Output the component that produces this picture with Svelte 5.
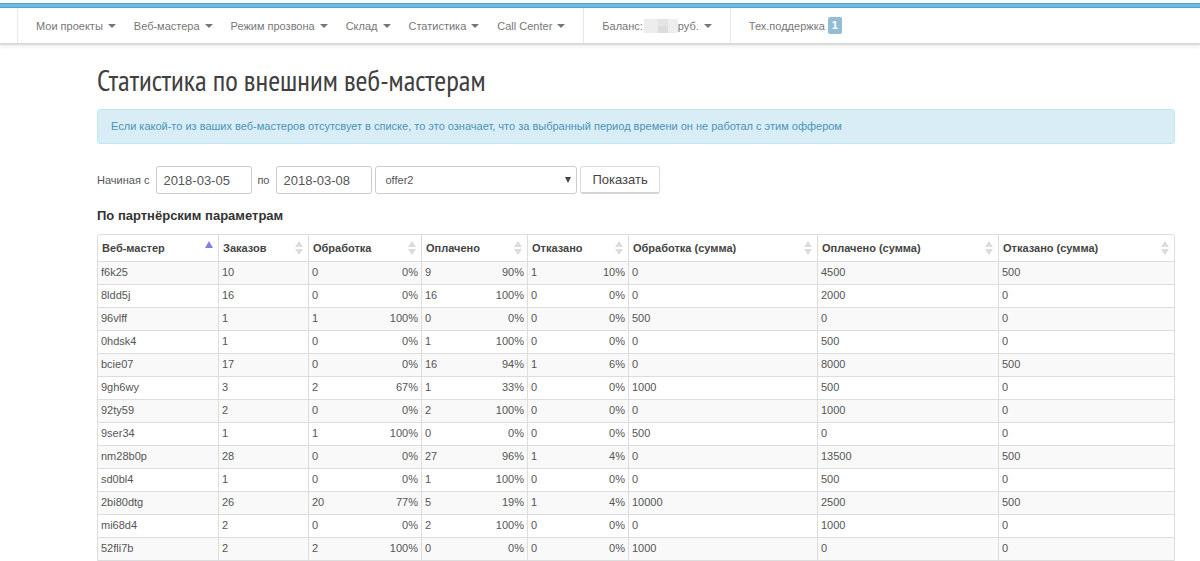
<script lang="ts">
	interface Cell {
		value: string;
		percent?: string;
	}

	const menu = ['Мои проекты', 'Веб-мастера', 'Режим прозвона', 'Склад', 'Статистика', 'Call Center'];

	const columns = [
		{ title: 'Веб-мастер', width: 120 },
		{ title: 'Заказов', width: 90 },
		{ title: 'Обработка', width: 113 },
		{ title: 'Оплачено', width: 106 },
		{ title: 'Отказано', width: 101 },
		{ title: 'Обработка (сумма)', width: 189 },
		{ title: 'Оплачено (сумма)', width: 181 },
		{ title: 'Отказано (сумма)', width: 176 }
	];

	// "count/percent" is drawn as a left and a right value in one cell
	const source = [
		['f6k25', '10', '0/0%', '9/90%', '1/10%', '0', '4500', '500'],
		['8ldd5j', '16', '0/0%', '16/100%', '0/0%', '0', '2000', '0'],
		['96vlff', '1', '1/100%', '0/0%', '0/0%', '500', '0', '0'],
		['0hdsk4', '1', '0/0%', '1/100%', '0/0%', '0', '500', '0'],
		['bcie07', '17', '0/0%', '16/94%', '1/6%', '0', '8000', '500'],
		['9gh6wy', '3', '2/67%', '1/33%', '0/0%', '1000', '500', '0'],
		['92ty59', '2', '0/0%', '2/100%', '0/0%', '0', '1000', '0'],
		['9ser34', '1', '1/100%', '0/0%', '0/0%', '500', '0', '0'],
		['nm28b0p', '28', '0/0%', '27/96%', '1/4%', '0', '13500', '500'],
		['sd0bl4', '1', '0/0%', '1/100%', '0/0%', '0', '500', '0'],
		['2bi80dtg', '26', '20/77%', '5/19%', '1/4%', '10000', '2500', '500'],
		['mi68d4', '2', '0/0%', '2/100%', '0/0%', '0', '1000', '0'],
		['52fli7b', '2', '2/100%', '0/0%', '0/0%', '1000', '0', '0']
	];

	const rows: Cell[][] = source.map((row) =>
		row.map((text) => {
			const [value, percent] = text.split('/');
			return { value, percent };
		})
	);

	let dateFrom = $state('2018-03-05');
	let dateTo = $state('2018-03-08');
	let offer = $state('offer2');
</script>

<header>
	<div class="strip"></div>
	<nav class="navbar">
		<ul class="nav-group">
			{#each menu as item}
				<li><a href="#menu">{item}<span class="caret"></span></a></li>
			{/each}
		</ul>
		<ul class="nav-group">
			<li>
				<a href="#balance">
					Баланс:
					<span class="masked"><i></i><i></i><i></i><i></i><i></i><i></i></span>руб.<span class="caret"></span>
				</a>
			</li>
		</ul>
		<ul class="nav-group">
			<li><a href="#support">Тех.поддержка<span class="badge">1</span></a></li>
		</ul>
	</nav>
</header>

<main class="content">
	<h1>Статистика по внешним веб-мастерам</h1>

	<div class="alert">
		Если какой-то из ваших веб-мастеров отсутсвует в списке, то это означает, что за выбранный период времени он не работал с этим оффером
	</div>

	<form class="filters" onsubmit={(e) => e.preventDefault()}>
		<label for="date-from">Начиная с</label>
		<input id="date-from" type="text" bind:value={dateFrom} />
		<label for="date-to">по</label>
		<input id="date-to" type="text" bind:value={dateTo} />
		<div class="select-wrap">
			<select bind:value={offer} aria-label="Оффер">
				<option value="offer2">offer2</option>
			</select>
			<svg class="select-arrow" viewBox="0 0 6 6" width="6" height="6"><path d="M0 0h6L3 6z" fill="#444" /></svg>
		</div>
		<button type="submit">Показать</button>
	</form>

	<h2>По партнёрским параметрам</h2>

	<table>
		<colgroup>
			{#each columns as column}
				<col style="width: {column.width}px" />
			{/each}
		</colgroup>
		<thead>
			<tr>
				{#each columns as column, i}
					<th scope="col">
						<div class="head">
							<span>{column.title}</span>
							<svg class="sort" viewBox="0 0 8 14" width="8" height="14">
								{#if i === 0}
									<path d="M0 7l4-7 4 7z" fill="#7f82e4" />
								{:else}
									<path d="M0 6l4-6 4 6zM0 8h8l-4 6z" fill="#dcdcdc" />
								{/if}
							</svg>
						</div>
					</th>
				{/each}
			</tr>
		</thead>
		<tbody>
			{#each rows as row}
				<tr>
					{#each row as cell}
						<td>
							{#if cell.percent}
								<div class="pair"><span>{cell.value}</span><span>{cell.percent}</span></div>
							{:else}
								{cell.value}
							{/if}
						</td>
					{/each}
				</tr>
			{/each}
		</tbody>
	</table>
</main>

<style>
	:global(body) {
		background: #fff;
		color: #555;
		font-family: 'Liberation Sans', Arial, sans-serif;
		font-size: 11px;
		line-height: 18px;
	}

	header {
		padding-top: 3px;
		border-bottom: 2px solid #dadada;
		box-shadow: 0 1px 4px rgba(0, 0, 0, 0.1);
	}

	.strip {
		height: 3px;
		border-top: 1px solid #5b9fc4;
		border-bottom: 1px solid #5b9fc4;
		background: #6cbcea;
	}

	.navbar {
		display: flex;
		padding-left: 17px;
	}

	.nav-group {
		display: flex;
		margin: 0;
		padding: 0 9px;
		border-left: 1px solid #e8e8e8;
		list-style: none;
	}

	.nav-group a {
		display: flex;
		align-items: center;
		height: 35px;
		padding: 0 9px;
		color: #777;
		text-decoration: none;
		white-space: nowrap;
	}

	.caret {
		margin-left: 5px;
		border: 4px solid transparent;
		border-top-color: #777;
		border-bottom: 0;
	}

	.masked {
		display: grid;
		grid-template-columns: 14px 10px 10px;
		margin-left: 1px;
	}

	.masked i {
		height: 7px;
		background: #ededed;
	}

	.masked i:nth-child(3n + 2) {
		background: #e4e4e4;
	}

	.masked i:nth-child(5) {
		background: #dcdcdc;
	}

	.badge {
		margin-left: 3px;
		padding: 0 4px;
		border-radius: 2px;
		background: #93bdd2;
		color: #fff;
		font-weight: bold;
		line-height: 17px;
	}

	.content {
		margin: 0 25px 0 97px;
	}

	h1 {
		margin: 16px 0 10px;
		color: #404040;
		font-family: 'PT Sans Narrow', 'Liberation Sans Narrow', 'Open Sans Condensed', sans-serif;
		font-size: 29px;
		font-weight: normal;
		line-height: 38px;
	}

	.alert {
		padding: 7px 13px 8px;
		border: 1px solid #bce8f1;
		border-radius: 3px;
		background: #d9edf7;
		color: #4a94b8;
	}

	.filters {
		display: flex;
		align-items: center;
		margin-top: 22px;
	}

	input,
	select,
	button {
		box-sizing: border-box;
		height: 28px;
		border: 1px solid #ccc;
		border-radius: 3px;
		background: #fff;
		color: #555;
		font-family: inherit;
		font-size: 13px;
	}

	input {
		width: 96px;
		margin-left: 7px;
		padding: 0 6px;
	}

	input + label {
		margin-left: 5px;
	}

	.select-wrap {
		position: relative;
		margin-left: 3px;
	}

	select {
		display: block;
		width: 202px;
		padding: 0 9px;
		appearance: none;
		font-size: 11px;
	}

	.select-arrow {
		position: absolute;
		top: 11px;
		right: 6px;
		pointer-events: none;
	}

	button {
		margin-left: 3px;
		padding: 0 11px;
		border-color: #ddd;
		border-bottom: 2px solid #d4d4d4;
		color: #444;
	}

	h2 {
		margin: 13px 0 9px;
		color: #333;
		font-size: 13px;
		line-height: 18px;
	}

	table {
		width: 100%;
		border: 1px solid #ddd;
		border-radius: 3px 3px 0 0;
		border-spacing: 0;
		table-layout: fixed;
	}

	th,
	td {
		padding: 1px 3px 3px;
		border-left: 1px solid #ddd;
		border-top: 1px solid #ddd;
		text-align: left;
	}

	th {
		padding: 4px 5px 4px 4px;
		border-top: 0;
		color: #444;
	}

	th:first-child,
	td:first-child {
		border-left: 0;
	}

	tbody tr:nth-child(odd) {
		background: #f9f9f9;
	}

	.head,
	.pair {
		display: flex;
		align-items: center;
		justify-content: space-between;
	}
</style>
